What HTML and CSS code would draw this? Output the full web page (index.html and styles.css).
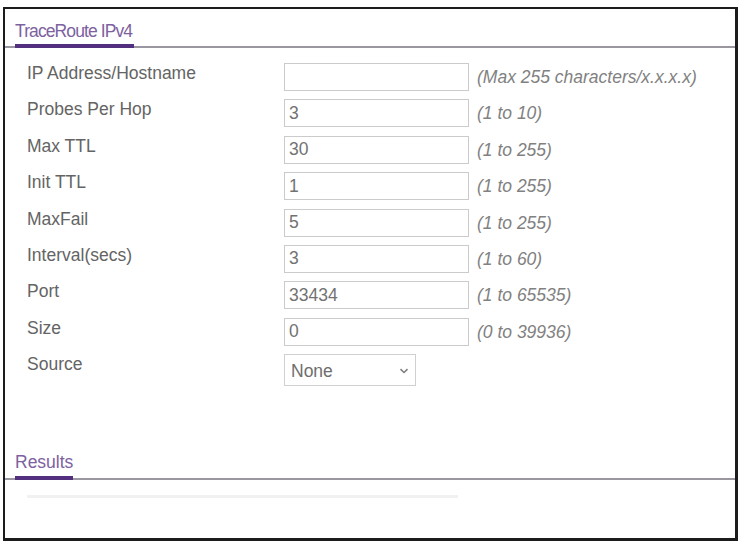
FILE: index.html
```html
<!DOCTYPE html>
<html>
<head>
<meta charset="utf-8">
<link rel="stylesheet" href="styles.css">
</head>
<body>
<div class="frame">
  <div class="tabbar">
    <span class="tab tab-main">TraceRoute IPv4</span>
  </div>
  <div class="form">
    <div class="row"><span class="label">IP Address/Hostname</span><input class="field" type="text" value=""><span class="hint">(Max 255 characters/x.x.x.x)</span></div>
    <div class="row"><span class="label">Probes Per Hop</span><input class="field" type="text" value="3"><span class="hint">(1 to 10)</span></div>
    <div class="row"><span class="label">Max TTL</span><input class="field" type="text" value="30"><span class="hint">(1 to 255)</span></div>
    <div class="row"><span class="label">Init TTL</span><input class="field" type="text" value="1"><span class="hint">(1 to 255)</span></div>
    <div class="row"><span class="label">MaxFail</span><input class="field" type="text" value="5"><span class="hint">(1 to 255)</span></div>
    <div class="row"><span class="label">Interval(secs)</span><input class="field" type="text" value="3"><span class="hint">(1 to 60)</span></div>
    <div class="row"><span class="label">Port</span><input class="field" type="text" value="33434"><span class="hint">(1 to 65535)</span></div>
    <div class="row"><span class="label">Size</span><input class="field" type="text" value="0"><span class="hint">(0 to 39936)</span></div>
    <div class="row"><span class="label">Source</span>
      <div class="select">
        <span class="select-text">None</span>
        <svg class="chev" width="10" height="6" viewBox="0 0 10 6"><path d="M1.5 1.2 L5 4.5 L8.5 1.2" fill="none" stroke="#808080" stroke-width="1.6"/></svg>
      </div>
    </div>
  </div>
  <div class="tabbar results-bar">
    <span class="tab">Results</span>
  </div>
  <div class="empty-line"></div>
</div>
</body>
</html>
```

FILE: styles.css
```css
html, body {
  margin: 0;
  padding: 0;
  background: #ffffff;
}
body {
  font-family: "Liberation Sans", Arial, sans-serif;
  color: #646464;
}
.frame {
  box-sizing: border-box;
  width: 735px;
  height: 534px;
  margin: 7px 0 0 3px;
  border: 2px solid #1c1c1c;
  border-right-width: 3px;
  border-bottom-width: 3px;
  display: flex;
  flex-direction: column;
}
.tabbar {
  display: flex;
  padding-left: 10px;
  padding-top: 11.5px;
  border-bottom: 2px solid #9a97a0;
}
.tab {
  font-size: 17.5px;
  line-height: 20px;
  color: #7d61a0;
  padding-bottom: 3.5px;
  border-bottom: 4px solid #53307f;
  margin-bottom: -2px;
}
.tab-main {
  letter-spacing: -0.9px;
  padding-right: 2px;
}
.form {
  margin-top: 15px;
  padding-left: 22px;
  display: flex;
  flex-direction: column;
}
.row {
  display: flex;
  align-items: flex-start;
  height: 36.4px;
}
.label {
  width: 257px;
  font-size: 17.5px;
  line-height: 20px;
  color: #646464;
}
.field {
  box-sizing: border-box;
  width: 185px;
  height: 28px;
  margin: 0;
  padding: 0 4px;
  border: 1px solid #cbcbcb;
  font-family: "Liberation Sans", Arial, sans-serif;
  font-size: 17.5px;
  color: #727272;
  background: #fff;
  outline: none;
}
.hint {
  margin-left: 8px;
  font-size: 17.5px;
  line-height: 28px;
  font-style: italic;
  color: #818181;
}
.select {
  box-sizing: border-box;
  width: 132px;
  height: 32px;
  border: 1px solid #d0d0d0;
  display: flex;
  align-items: center;
  justify-content: space-between;
  padding: 0 6px 0 6px;
  font-size: 17.5px;
  color: #6e6e6e;
}
.select-text {
  line-height: 20px;
  padding-top: 2px;
}
.chev {
  display: block;
  margin-top: 2px;
}
.results-bar {
  margin-top: 61.5px;
  padding-top: 0;
}
.empty-line {
  margin: 15px 0 0 22px;
  width: 431px;
  height: 3px;
  background: #f1f1f1;
}
```
